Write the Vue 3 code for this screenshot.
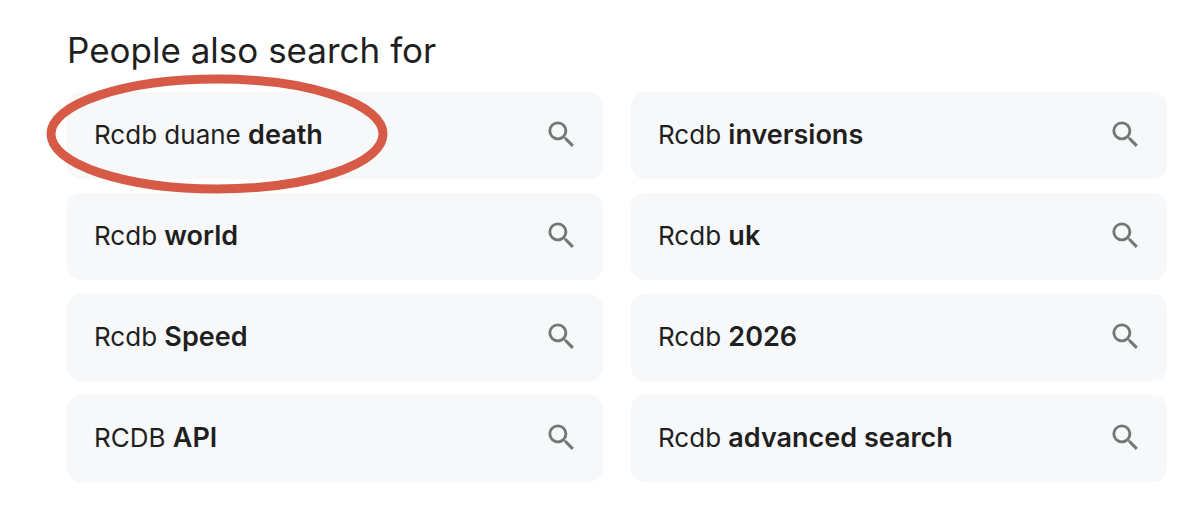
<script setup>
const searches = [
  { lead: 'Rcdb duane', rest: 'death', marked: true },
  { lead: 'Rcdb', rest: 'inversions' },
  { lead: 'Rcdb', rest: 'world' },
  { lead: 'Rcdb', rest: 'uk' },
  { lead: 'Rcdb', rest: 'Speed' },
  { lead: 'Rcdb', rest: '2026' },
  { lead: 'RCDB', rest: 'API' },
  { lead: 'Rcdb', rest: 'advanced search' },
]
</script>

<template>
  <section class="related">
    <h2>People also search for</h2>
    <nav class="grid" aria-label="People also search for">
      <a v-for="item in searches" :key="item.lead + item.rest" class="card" href="#">
        <span class="label">{{ item.lead }} <b>{{ item.rest }}</b></span>
        <svg class="icon" viewBox="0 0 24 24" aria-hidden="true">
          <path d="M15.5 14h-.79l-.28-.27A6.47 6.47 0 0 0 16 9.5 6.5 6.5 0 1 0 9.5 16c1.61 0 3.09-.59 4.23-1.57l.27.28v.79l5 4.99L20.49 19l-4.99-5zm-6 0C7.01 14 5 11.99 5 9.5S7.01 5 9.5 5 14 7.01 14 9.5 11.99 14 9.5 14z" />
        </svg>
        <svg v-if="item.marked" class="ring" viewBox="0 0 342 120" aria-hidden="true">
          <ellipse cx="171" cy="60" rx="166" ry="55" />
        </svg>
      </a>
    </nav>
  </section>
</template>

<style>
body {
  margin: 0;
  background: #fff;
}
</style>

<style scoped>
.related {
  padding: 26px 33px 46px 67px;
  font-family: Inter, "Liberation Sans", sans-serif;
  color: #1f1f1f;
}

h2 {
  margin: 0;
  padding-bottom: 18px;
  font-size: 35px;
  line-height: 48px;
  font-weight: 400;
}

.grid {
  display: grid;
  grid-template-columns: 1fr 1fr;
  gap: 14px 28px;
}

.card {
  position: relative;
  display: flex;
  align-items: center;
  justify-content: space-between;
  box-sizing: border-box;
  min-height: 87px;
  padding: 0 24px 2px 27px;
  border-radius: 14px;
  background: #f7f8fa;
  color: inherit;
  text-decoration: none;
}

.label {
  font-size: 26px;
  line-height: 36px;
  font-weight: 400;
}

b {
  font-size: 27px;
  font-weight: 600;
}

.icon {
  width: 35px;
  height: 35px;
  fill: #747775;
}

.ring {
  position: absolute;
  z-index: 1;
  left: -21px;
  top: -18px;
  width: 342px;
  height: 120px;
  fill: none;
  stroke: #d75a46;
  stroke-width: 9;
}
</style>
